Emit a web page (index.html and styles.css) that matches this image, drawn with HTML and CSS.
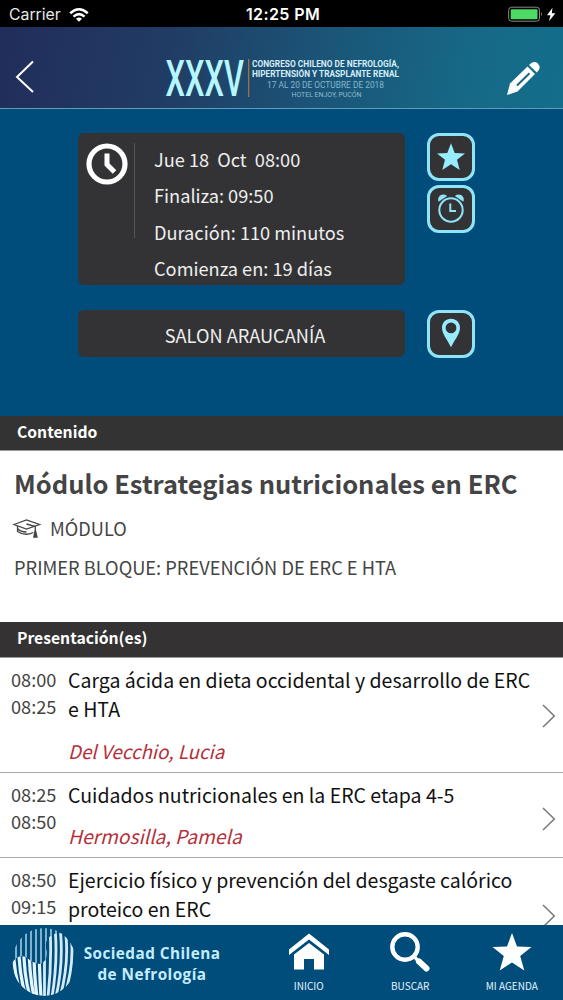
FILE: index.html
```html
<!DOCTYPE html>
<html lang="es">
<head>
<meta charset="UTF-8">
<meta name="viewport" content="width=device-width, initial-scale=1.0">
<title>Congreso Chileno de Nefrología</title>
<link rel="stylesheet" href="styles.css">
</head>
<body>

<div class="status-bar">
    <div class="carrier">
        <span>Carrier</span>
        <svg width="20" height="14" viewBox="0 0 20 14" fill="none" stroke="#fff" stroke-width="2.5">
            <path d="M1.2 5.2 Q10 -2.6 18.8 5.2"/>
            <path d="M4.5 8.6 Q10 3.6 15.5 8.6"/>
            <path d="M7 10.7 Q10 8.2 13 10.7 L10 13.8 Z" fill="#fff" stroke="none"/>
        </svg>
    </div>
    <span class="clock">12:25 PM</span>
    <div class="battery">
        <svg width="49" height="17" viewBox="0 0 49 17">
            <rect x="0.7" y="1.2" width="30.8" height="14" rx="3" fill="none" stroke="#8a8a8a" stroke-width="1"/>
            <rect x="2.7" y="3.2" width="26.8" height="10" rx="1" fill="#4cd964"/>
            <path d="M33 6 Q35 8.2 33 10.5 Z" fill="#777"/>
            <path d="M44.5 1.8 L39 9.3 H42.4 L41 15.2 L47.4 7.2 H43.8 Z" fill="#fff"/>
        </svg>
    </div>
</div>

<header class="header">
    <svg class="back" width="20" height="34" viewBox="0 0 20 34" fill="none" stroke="#fff" stroke-width="2">
        <path d="M18 1.5 L2 17 L18 32"/>
    </svg>
    <svg class="congress" width="240" height="53" viewBox="0 0 240 53">
        <text class="xxxv" x="0.5" y="40.5" textLength="78.5" lengthAdjust="spacingAndGlyphs">XXXV</text>
        <rect x="83" y="4" width="1.3" height="38" fill="#a3713f"/>
        <text class="congress-title" x="87" y="12.2" textLength="147" lengthAdjust="spacingAndGlyphs">CONGRESO CHILENO DE NEFROLOGÍA,</text>
        <text class="congress-title" x="87" y="22.4" textLength="147" lengthAdjust="spacingAndGlyphs">HIPERTENSIÓN Y TRASPLANTE RENAL</text>
        <text class="congress-date" x="102" y="32.8" textLength="117" lengthAdjust="spacingAndGlyphs">17 AL 20 DE OCTUBRE DE 2018</text>
        <text class="congress-place" x="126.5" y="41.8" textLength="70" lengthAdjust="spacingAndGlyphs">HOTEL ENJOY, PUCÓN</text>
    </svg>
    <svg class="edit" width="36" height="36" viewBox="0 0 36 36">
        <path d="M2 35 L5 23.5 L22.5 6.5 L30 14 L12.5 31.5 Z" fill="#fff"/>
        <path d="M24 5 Q28.5 0 32.8 3.5 Q37 7.8 31.8 12.5 Z" fill="#fff"/>
        <path d="M12 25.5 L24.5 13.2" stroke="#1b6685" stroke-width="2" fill="none"/>
    </svg>
</header>

<section class="info">
    <div class="info-row">
        <div class="schedule">
            <div class="schedule-icon">
                <svg width="42" height="42" viewBox="0 0 42 42" fill="none" stroke="#fff">
                    <circle cx="21" cy="21" r="18" stroke-width="5.2"/>
                    <path d="M21 10.5 V21.5 L28.5 29" stroke-width="5"/>
                </svg>
            </div>
            <div class="schedule-text">
                <p>Jue 18&nbsp; Oct&nbsp; 08:00</p>
                <p>Finaliza: 09:50</p>
                <p>Duración: 110 minutos</p>
                <p>Comienza en: 19 días</p>
            </div>
        </div>
        <div class="actions">
            <div class="action">
                <svg width="30" height="30" viewBox="0 0 30 30"><path d="M15 1.3 L18.7 11 L29 11.4 L21 17.8 L23.7 28 L15 22.3 L6.3 28 L9 17.8 L1 11.4 L11.3 11 Z" fill="#97edff"/></svg>
            </div>
            <div class="action">
                <svg width="30" height="32" viewBox="0 0 30 32" fill="none" stroke="#8fe5f7" stroke-width="2">
                    <circle cx="15" cy="17" r="11.7"/>
                    <path d="M14.3 10.5 V17.9 H20"/>
                    <path d="M2.6 8.8 C.6 3.6 6 -.6 11.2 2.9 Z M27.4 8.8 C29.4 3.6 24 -.6 18.8 2.9 Z" fill="#8fe5f7" stroke="none"/>
                </svg>
            </div>
        </div>
    </div>
    <div class="info-row place-row">
        <div class="place">SALON ARAUCANÍA</div>
        <div class="action">
            <svg class="pin" width="20" height="30" viewBox="0 0 20 30"><path fill-rule="evenodd" d="M10 .7 C4.8 .7 1 4.6 1 9.7 C1 16 6.6 22 10 29.3 C13.4 22 19 16 19 9.7 C19 4.6 15.2 .7 10 .7 Z M10 4.5 A5.4 5.4 0 1 1 10 15.3 A5.4 5.4 0 1 1 10 4.5 Z" fill="#97edff"/></svg>
        </div>
    </div>
</section>

<h2 class="section-title">Contenido</h2>
<section class="content">
    <h1>Módulo Estrategias nutricionales en ERC</h1>
    <div class="module">
        <svg width="28" height="21" viewBox="0 0 28 21" fill="none" stroke="#444" stroke-width="1.3">
            <path d="M1 6.5 L13.5 2 L26.5 6.5 L13.5 11 Z"/>
            <path d="M4.5 8 V13.5 Q12 18.5 20.3 14.5 M4.5 10.5 Q7.5 14 13.5 14"/>
            <path d="M13.5 6 L22.3 8.5 V12"/>
            <path d="M22.3 12 L20.8 19 H24 L22.3 12" fill="#444"/>
        </svg>
        <span>MÓDULO</span>
    </div>
    <p class="block">PRIMER BLOQUE: PREVENCIÓN DE ERC E HTA</p>
</section>

<h2 class="section-title second">Presentación(es)</h2>
<section class="talks">
    <div class="talk">
        <div class="times">08:00<br>08:25</div>
        <div class="talk-body">
            <p class="talk-title">Carga ácida en dieta occidental y desarrollo de ERC<br>e HTA</p>
            <p class="speaker">Del Vecchio, Lucia</p>
        </div>
        <svg class="chevron" width="14" height="24" viewBox="0 0 14 24"><path d="M1 1 L12.3 12 L1 23"/></svg>
    </div>
    <div class="talk">
        <div class="times">08:25<br>08:50</div>
        <div class="talk-body">
            <p class="talk-title">Cuidados nutricionales en la ERC etapa 4-5</p>
            <p class="speaker wide">Hermosilla, Pamela</p>
        </div>
        <svg class="chevron" width="14" height="24" viewBox="0 0 14 24"><path d="M1 1 L12.3 12 L1 23"/></svg>
    </div>
    <div class="talk last">
        <div class="times">08:50<br>09:15</div>
        <div class="talk-body">
            <p class="talk-title">Ejercicio físico y prevención del desgaste calórico<br>proteico en ERC</p>
        </div>
        <svg class="chevron" width="14" height="24" viewBox="0 0 14 24"><path d="M1 1 L12.3 12 L1 23"/></svg>
    </div>
</section>

<footer class="footer">
    <svg class="kidney" width="66" height="70" viewBox="0 0 66 70">
        <defs>
            <clipPath id="disc"><ellipse cx="32" cy="35" rx="32" ry="34"/></clipPath>
            <clipPath id="bean"><path d="M0 37 Q4 27 14 30 Q22 37 28 37 Q35 35 35 25 Q32 17 36 11 Q45 3 54 8 Q64 16 64 38 Q60 69 32 69 Q4 68 0 37 Z"/></clipPath>
        </defs>
        <g clip-path="url(#disc)">
            <path d="M4 16V34 M9 0V34 M14 0V34 M19 0V36 M24 0V38 M29 0V38 M34 0V38 M39 0V38 M44 0V38 M49 0V38" stroke="#8fbddb" stroke-width="1.8"/>
            <g clip-path="url(#bean)">
                <path d="M0 0H66V70H0Z" fill="#004c7a"/>
                <path d="M2 0Q-1 42 10 70 M7 0Q5 42 14 70 M12 0Q10 42 18 70 M17 0Q16 42 22 70 M22 0Q21 42 25 70 M27 0Q27 42 29 70" fill="none" stroke="#e3f5ff" stroke-width="3.2"/>
                <path d="M32.5 0V70 M38 0Q40 35 36 70 M43 0Q46 35 40 70 M48 0Q52 35 44 70 M53 0Q58 35 48 70 M58 0Q64 35 52 70" fill="none" stroke="#d3ebf8" stroke-width="2.8"/>
            </g>
        </g>
    </svg>
    <div class="society">Sociedad Chilena<br>de Nefrología</div>
    <nav class="tabs">
        <div class="tab">
            <svg width="42" height="42" viewBox="0 0 42 42" fill="#fff">
                <path d="M21 2.5 L41 18.5 V24 L21 8.5 L1 24 V18.5 Z"/>
                <path d="M21 12 L36 23.5 V38.5 H26 V28 H16 V38.5 H6 V23.5 Z"/>
            </svg>
            <span>INICIO</span>
        </div>
        <div class="tab">
            <svg width="42" height="42" viewBox="0 0 42 42" fill="none" stroke="#fff">
                <circle cx="16" cy="16" r="12.7" stroke-width="4.4"/>
                <path d="M25 25 L29 30" stroke-width="3.5"/>
                <path d="M30 30.5 L37.5 37.5" stroke-width="6" stroke-linecap="round"/>
            </svg>
            <span>BUSCAR</span>
        </div>
        <div class="tab">
            <svg width="42" height="42" viewBox="0 0 42 42" fill="#fff"><path d="M21 2 L26 15.5 L40.5 16 L29.2 25 L33.3 39.5 L21 31.5 L8.7 39.5 L12.8 25 L1.5 16 L16 15.5 Z"/></svg>
            <span>MI AGENDA</span>
        </div>
    </nav>
</footer>

</body>
</html>
```
FILE: styles.css
```css
* {
    box-sizing: border-box;
}

body {
    margin: 0;
    width: 563px;
    height: 1000px;
    overflow: hidden;
    display: flex;
    flex-direction: column;
    background-color: #fff;
    font-family: 'Noto Sans CJK JP', 'Noto Sans', sans-serif;
    color: #444;
}

h1, h2, p {
    margin: 0;
}

svg {
    display: block;
    flex: none;
    overflow: visible;
}

.status-bar {
    flex: none;
    height: 27px;
    padding: 0 6px 0 9px;
    display: grid;
    grid-template-columns: 1fr auto 1fr;
    align-items: center;
    background-color: #000;
    color: #e8e8e8;
    font-family: Inter, 'Liberation Sans', sans-serif;
    font-size: 15.8px;
    line-height: 29px;
}

.carrier {
    display: flex;
    align-items: center;
    gap: 8px;
}

.clock {
    font-size: 16px;
    font-weight: 600;
    letter-spacing: 0.4px;
    color: #fff;
}

.battery {
    justify-self: end;
}

.header {
    flex: none;
    height: 82px;
    padding: 0 22px 0 15px;
    display: flex;
    align-items: flex-start;
    background: linear-gradient(100deg, #212d5b 0%, #213c64 30%, #1b5376 55%, #166a88 85%, #126e8b 100%);
    border-bottom: 1px solid #5f9dc0;
}

.back {
    margin-top: 33px;
}

.congress {
    margin: 28px 0 0 130px;
}

.edit {
    margin: 33px 0 0 auto;
}

.xxxv {
    font-family: Roboto, sans-serif;
    font-size: 50px;
    font-weight: 500;
    fill: #b5f6ff;
}

.congress-title {
    font-family: Roboto, sans-serif;
    font-size: 8.4px;
    font-weight: 700;
    fill: #d5edf8;
}

.congress-date {
    font-family: Roboto, sans-serif;
    font-size: 8.2px;
    fill: #83b7cc;
}

.congress-place {
    font-family: Roboto, sans-serif;
    font-size: 6.5px;
    fill: #8fbdd0;
}

.info {
    flex: none;
    height: 307px;
    padding: 24px 0 0 78px;
    background-color: #004c7a;
}

.info-row {
    display: flex;
    align-items: flex-start;
    gap: 22px;
}

.schedule {
    width: 327px;
    height: 152px;
    padding: 8px 0 0 8px;
    display: flex;
    border-radius: 6px;
    background-color: #333335;
}

.schedule-icon {
    width: 49px;
    height: 95px;
    margin-top: 2px;
    border-right: 1px solid #555;
}

.schedule-text {
    margin-top: -0.5px;
    padding-left: 19px;
    font-size: 18.2px;
    line-height: 36.6px;
    color: #eee;
}

.actions {
    display: flex;
    flex-direction: column;
    gap: 4px;
}

.action {
    width: 48px;
    height: 48px;
    display: flex;
    align-items: center;
    justify-content: center;
    border: 3px solid #8fe5f7;
    border-radius: 12px;
    background-color: #333335;
}

.pin {
    margin-bottom: 2px;
}

.place-row {
    margin-top: 25px;
}

.place {
    width: 327px;
    height: 47px;
    padding-left: 7px;
    border-radius: 6px;
    background-color: #333335;
    color: #eee;
    font-size: 18.2px;
    line-height: 50px;
    text-align: center;
}

.section-title {
    flex: none;
    height: 35px;
    padding-left: 17px;
    background-color: #333;
    border-bottom: 1px solid #999;
    color: #fff;
    font-size: 15.7px;
    font-weight: 700;
    line-height: 32px;
}

.content {
    flex: none;
    height: 172px;
    padding: 11px 14px 0;
}

.content h1 {
    font-size: 25.5px;
    font-weight: 700;
    line-height: 42px;
    white-space: nowrap;
}

.module {
    height: 40px;
    margin-top: 4px;
    display: flex;
    align-items: center;
    gap: 9px;
    font-size: 18.2px;
    line-height: 40px;
}

.module svg {
    margin-left: -1px;
}

.block {
    font-size: 18.25px;
    line-height: 39px;
    white-space: nowrap;
}

.section-title.second {
    height: 36px;
    margin-top: -1px;
    background-color: #343233;
}

.talks {
    flex: 1;
    min-height: 0;
    overflow: hidden;
}

.talk {
    height: 115px;
    padding: 8px 7px 0 11px;
    display: flex;
    border-bottom: 1px solid #aaa;
}

.talk + .talk {
    height: 85px;
}

.talk + .talk.last {
    height: 116px;
}

.times {
    width: 57px;
    font-size: 18.2px;
    line-height: 27px;
}

.talk-body {
    flex: 1;
    white-space: nowrap;
}

.talk-title {
    color: #111;
    font-size: 19.5px;
    line-height: 28.5px;
}

.speaker {
    margin-top: 13px;
    color: #b5303a;
    font-size: 18.8px;
    font-style: italic;
    line-height: 29px;
}

.speaker.wide {
    margin-top: 12px;
    font-size: 19.2px;
}

.chevron {
    margin-top: 38px;
    fill: none;
    stroke: #777;
    stroke-width: 1.5;
}

.talk + .talk .chevron {
    margin-top: 26px;
}

.talk + .talk.last .chevron {
    margin-top: 38px;
}

.footer {
    flex: none;
    height: 75px;
    padding-left: 12px;
    display: flex;
    align-items: flex-start;
    background-color: #004c7a;
    color: #fff;
}

.kidney {
    margin-top: 2px;
}

.society {
    width: 148px;
    margin-top: 18px;
    color: #c4ecff;
    font-family: 'Open Sans', 'Noto Sans', sans-serif;
    font-size: 15.3px;
    font-weight: 700;
    letter-spacing: 0.45px;
    line-height: 20.5px;
    text-align: center;
    white-space: nowrap;
}

.tabs {
    margin-left: 32px;
    display: flex;
}

.tab {
    width: 101.5px;
    padding-top: 6px;
    display: flex;
    flex-direction: column;
    align-items: center;
    color: #e5f3fa;
    font-size: 10px;
    line-height: 14px;
}

.tab span {
    margin-top: 6px;
}
```
